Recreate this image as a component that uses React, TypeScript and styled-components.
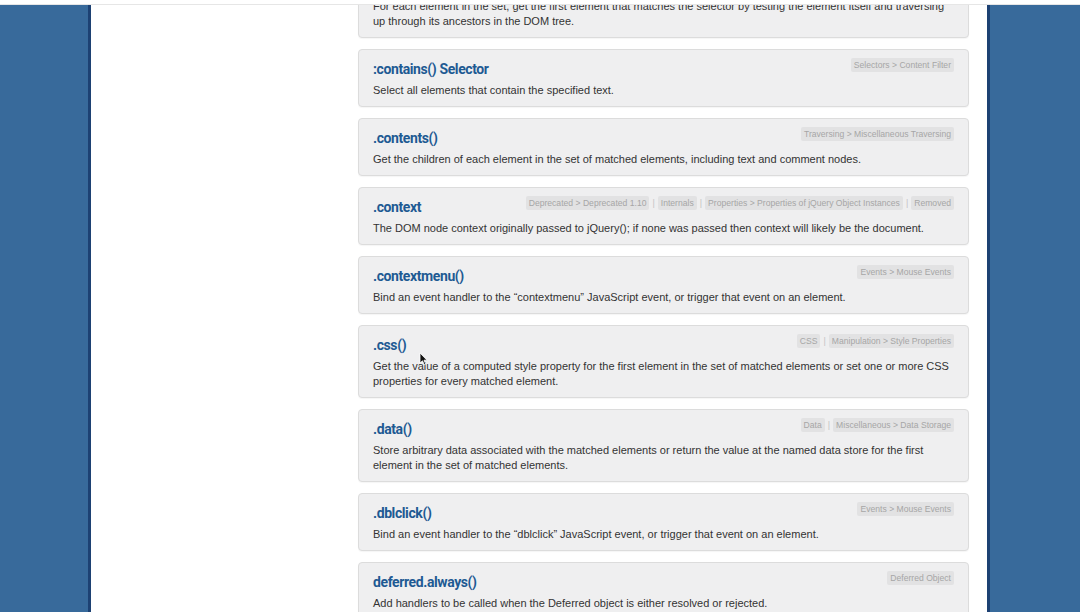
import React from "react";
import styled, { createGlobalStyle } from "styled-components";

const GlobalStyle = createGlobalStyle`
  html, body { margin: 0; padding: 0; background: #ffffff; }
  body { font-family: "Liberation Sans", Arial, sans-serif; overflow: hidden; }
  * { box-sizing: border-box; }
`;

const Page = styled.div`
  position: relative;
  display: flex;
  width: 1080px;
  height: 612px;
  overflow: hidden;
`;

const TopBar = styled.div`
  position: absolute;
  left: 0;
  top: 0;
  right: 0;
  height: 5px;
  background: #ffffff;
  border-bottom: 1px solid #e6e6e6;
  z-index: 5;
`;

const Rail = styled.div<{ $side: "left" | "right" }>`
  flex: 0 0 ${(p) => (p.$side === "left" ? "91px" : "93px")};
  background: #386a9b;
  ${(p) =>
    p.$side === "left"
      ? "border-right: 3px solid #1d4173;"
      : "border-left: 3px solid #1d4173;"}
`;

const Main = styled.main`
  flex: 1;
  background: #ffffff;
  padding: 0 18px 0 267px;
`;

const List = styled.div`
  display: flex;
  flex-direction: column;
  gap: 11px;
  margin-top: -35px;
`;

const Card = styled.article`
  background: #efeff0;
  border: 1px solid #dcdcdc;
  border-radius: 4px;
  box-shadow: 0 1px 1px rgba(0, 0, 0, 0.04);
  padding: 9px 14px 8px 14px;
`;

const Header = styled.div`
  display: flex;
  justify-content: space-between;
  align-items: flex-start;
  height: 20px;
  margin-bottom: 4px;
`;

const Title = styled.h2`
  margin: 0;
  font-family: "Roboto", "Liberation Sans", sans-serif;
  font-weight: 700;
  font-size: 14px;
  letter-spacing: -0.4px;
  line-height: 20px;
  color: #1e5a93;
  white-space: nowrap;
`;

const Tags = styled.div`
  display: flex;
  align-items: center;
  gap: 3px;
  margin-top: -1px;
`;

const Tag = styled.span`
  font-family: "Liberation Sans", Arial, sans-serif;
  font-size: 8.6px;
  line-height: 14px;
  padding: 0 3px;
  color: #a6a6a6;
  background: #e2e2e3;
  border-radius: 2px;
  white-space: nowrap;
`;

const Sep = styled.span`
  font-size: 9px;
  color: #c4c4c4;
  line-height: 14px;
`;

const Desc = styled.p`
  margin: 0;
  font-family: "Liberation Sans", Arial, sans-serif;
  font-size: 11px;
  line-height: 15px;
  color: #333333;
`;

const Cursor = styled.svg`
  position: absolute;
  left: 419px;
  top: 352px;
  z-index: 6;
`;

type Entry = { title: string; tags: string[]; desc: string };

const entries: Entry[] = [
  {
    title: ".closest()",
    tags: ["Traversing > Tree Traversal"],
    desc:
      "For each element in the set, get the first element that matches the selector by testing the element itself and traversing up through its ancestors in the DOM tree.",
  },
  {
    title: ":contains() Selector",
    tags: ["Selectors > Content Filter"],
    desc: "Select all elements that contain the specified text.",
  },
  {
    title: ".contents()",
    tags: ["Traversing > Miscellaneous Traversing"],
    desc:
      "Get the children of each element in the set of matched elements, including text and comment nodes.",
  },
  {
    title: ".context",
    tags: [
      "Deprecated > Deprecated 1.10",
      "Internals",
      "Properties > Properties of jQuery Object Instances",
      "Removed",
    ],
    desc:
      "The DOM node context originally passed to jQuery(); if none was passed then context will likely be the document.",
  },
  {
    title: ".contextmenu()",
    tags: ["Events > Mouse Events"],
    desc:
      "Bind an event handler to the \u201ccontextmenu\u201d JavaScript event, or trigger that event on an element.",
  },
  {
    title: ".css()",
    tags: ["CSS", "Manipulation > Style Properties"],
    desc:
      "Get the value of a computed style property for the first element in the set of matched elements or set one or more CSS properties for every matched element.",
  },
  {
    title: ".data()",
    tags: ["Data", "Miscellaneous > Data Storage"],
    desc:
      "Store arbitrary data associated with the matched elements or return the value at the named data store for the first element in the set of matched elements.",
  },
  {
    title: ".dblclick()",
    tags: ["Events > Mouse Events"],
    desc:
      "Bind an event handler to the \u201cdblclick\u201d JavaScript event, or trigger that event on an element.",
  },
  {
    title: "deferred.always()",
    tags: ["Deferred Object"],
    desc: "Add handlers to be called when the Deferred object is either resolved or rejected.",
  },
];

export default function App() {
  return (
    <>
      <GlobalStyle />
      <Page>
        <TopBar />
        <Rail $side="left" />
        <Main>
          <List>
            {entries.map((e) => (
              <Card key={e.title}>
                <Header>
                  <Title>{e.title}</Title>
                  <Tags>
                    {e.tags.map((t, i) => (
                      <React.Fragment key={t}>
                        {i > 0 && <Sep>|</Sep>}
                        <Tag>{t}</Tag>
                      </React.Fragment>
                    ))}
                  </Tags>
                </Header>
                <Desc>{e.desc}</Desc>
              </Card>
            ))}
          </List>
        </Main>
        <Rail $side="right" />
        <Cursor width="9" height="14" viewBox="0 0 9 14">
          <path d="M1 1 L1 11 L3.5 8.8 L5.3 12.8 L6.8 12.1 L5 8.2 L8 8.2 Z" fill="#111" stroke="#fff" strokeWidth="0.8" />
        </Cursor>
      </Page>
    </>
  );
}
